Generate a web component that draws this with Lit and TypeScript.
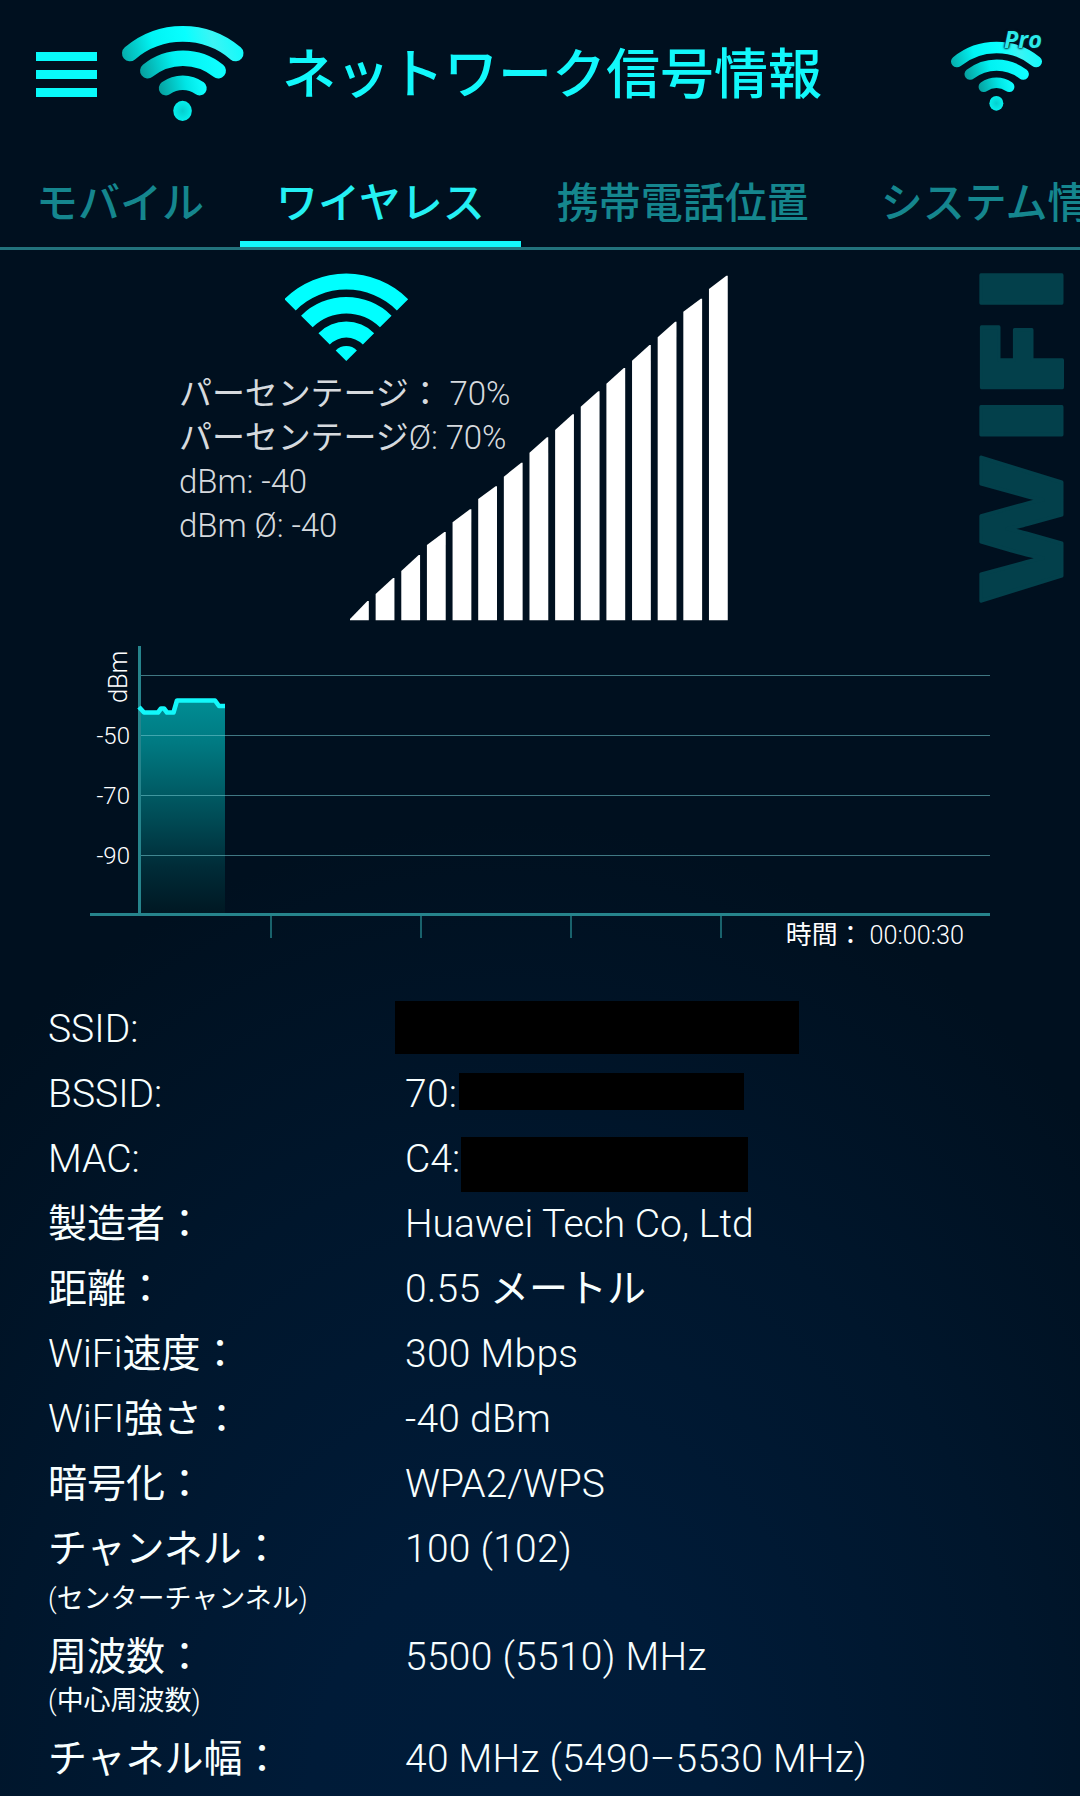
import { LitElement, html, svg, css } from "lit";
import { customElement, property } from "lit/decorators.js";

/* Japanese runs are set in regular weight beside the light Latin text. */
const mixed = (text: string) =>
  text
    .split(/([\u3000-\u9fff\uff00-\uffef]+)/)
    .filter((part) => part)
    .map((part) => (/[\u3000-\u9fff\uff00-\uffef]/.test(part) ? html`<span class="ja">${part}</span>` : part));

/* Rounded three-arc signal logo used in the title bar. */
@customElement("signal-logo")
class SignalLogo extends LitElement {
  static styles = css`
    :host { display: block; }
    svg { display: block; width: 100%; height: 100%; overflow: visible; }
    .arc { fill: none; stroke-linecap: round; }
  `;
  render() {
    return html`<svg viewBox="0 0 123 97" preserveAspectRatio="none">
      <defs>
        <linearGradient id="g1" gradientUnits="userSpaceOnUse" x1="0" y1="40" x2="123" y2="10">
          <stop offset="0" stop-color="#06a8a6" /><stop offset=".28" stop-color="#00f4f4" />
          <stop offset=".55" stop-color="#08ffff" /><stop offset=".75" stop-color="#3cf4f4" /><stop offset="1" stop-color="#0cfcfc" />
        </linearGradient>
        <linearGradient id="g2" gradientUnits="userSpaceOnUse" x1="18" y1="54" x2="100" y2="34">
          <stop offset="0" stop-color="#079a98" /><stop offset=".45" stop-color="#00f2f2" /><stop offset="1" stop-color="#10ffff" />
        </linearGradient>
        <linearGradient id="g3" gradientUnits="userSpaceOnUse" x1="36" y1="66" x2="84" y2="56">
          <stop offset="0" stop-color="#079c9a" /><stop offset=".6" stop-color="#00e6e6" /><stop offset="1" stop-color="#10ffff" />
        </linearGradient>
        <radialGradient id="g4"><stop offset="0" stop-color="#04cfcf" /><stop offset="1" stop-color="#06efec" /></radialGradient>
      </defs>
      <path class="arc" stroke="url(#g1)" stroke-width="16" d="M8 28.5A83 83 0 0 1 115 28.5" />
      <path class="arc" stroke="url(#g2)" stroke-width="15.5" d="M26 46A57 57 0 0 1 97.5 46" />
      <path class="arc" stroke="url(#g3)" stroke-width="14.5" d="M44.5 63.5A29 29 0 0 1 78.5 63.5" />
      <ellipse cx="61.3" cy="86.3" rx="9.4" ry="10.2" fill="url(#g4)" />
    </svg>`;
  }
}

/* Sharp wedge icon above the readings. */
const wedge = (() => {
  const band = (o: number, i: number) => {
    const k = Math.SQRT1_2, cx = 61.3, cy = 88;
    const p = (r: number, s: number) => `${cx + s * r * k} ${cy - r * k}`;
    return i
      ? `M${p(o, -1)}A${o} ${o} 0 0 1 ${p(o, 1)}L${p(i, 1)}A${i} ${i} 0 0 0 ${p(i, -1)}Z`
      : `M${p(o, -1)}A${o} ${o} 0 0 1 ${p(o, 1)}L${cx} ${cy}Z`;
  };
  return [band(87.5, 71.5), band(64, 47.6), band(39.4, 23.4), band(15, 0)];
})();

/* Top-left and top-right height offset of each bar. */
const barTops = [
  [344, 326], [319, 303], [296, 280], [270, 257], [247.3, 234.3], [224, 211.3], [201.7, 187.7],
  [177.7, 162.3], [155, 139.3], [131.7, 116.3], [108.7, 93], [85.7, 70], [62.3, 46.7], [36.7, 23.7], [14, 0.7],
];

@customElement("signal-panel")
class SignalPanel extends LitElement {
  static styles = css`
    :host {
      display: grid; height: 382px; box-sizing: border-box; padding-top: 23px;
      grid-template-columns: 179px 171px 378px 252px 84px 16px;
      grid-template-rows: 88px 1fr; align-items: start;
    }
    .ja { font-weight: 400; }
    .wedge { grid-column: 2 / 4; grid-row: 1; width: 124px; height: 88px; margin-left: 106px; }
    .readings { grid-column: 2 / 4; grid-row: 2; z-index: 1; padding-top: 11px; color: #d6dade; font-size: 33px; letter-spacing: -.1px; }
    .line { height: 44px; line-height: 44px; white-space: pre; }
    .bars { grid-column: 3; grid-row: 1 / 3; width: 378px; height: 348px; margin-top: 2px; }
    .word { grid-column: 5; grid-row: 1 / 3; width: 84px; height: 330px; margin-top: 3px; overflow: visible; }
    .word text { font-family: "Open Sans", sans-serif; font-weight: 800; font-size: 113px; fill: #03404b; stroke: #03404b; stroke-width: 3px; stroke-linejoin: round; }
  `;
  render() {
    const lines = ["パーセンテージ： 70%", "パーセンテージØ: 70%", "dBm: -40", "dBm Ø: -40"];
    return html`
      <svg class="wedge" viewBox="0 0 124 88">${wedge.map((d) => svg`<path fill="#00ffff" d=${d} />`)}</svg>
      <div class="readings">${lines.map((l) => html`<div class="line">${mixed(l)}</div>`)}</div>
      <svg class="bars" viewBox="0 0 378 348">
        ${barTops.map(([l, r], i) => {
          const x = i * 25.64;
          return svg`<polygon fill="#fff" points="${x},${l} ${x + 17.4},${r} ${x + 18.8},${r} ${x + 18.8},345.3 ${x},345.3" />`;
        })}
      </svg>
      <svg class="word" viewBox="0 0 84 330">
        <text transform="translate(82 327) rotate(-90) scale(1.26 1)" x="0 125 162.5 229.5">WIFI</text>
      </svg>`;
  }
}

@customElement("signal-chart")
class SignalChart extends LitElement {
  static styles = css`
    :host { display: block; height: 348px; }
    svg { display: block; }
    text { font-family: Roboto, "Noto Sans CJK JP", sans-serif; font-weight: 300; font-size: 24px; fill: #fff; white-space: pre; }
    .ja { font-weight: 400; }
    .unit { font-size: 25.4px; }
    .time { font-size: 25.2px; }
    .time .ja { font-size: 25.9px; }
    .axis { fill: #26848c; }
    .grid { fill: #6fc4cc; fill-opacity: .58; }
    .tick { fill: #19626c; }
    .trace { fill: none; stroke: #12f8fb; stroke-width: 4.6; stroke-linejoin: round; }
  `;
  render() {
    const trace = "139,75 144,80.5 158,80.5 161,76.5 164,76.5 167,80.5 173.5,80.5 177,68.5 215,68.5 219,74 225,74";
    return html`<svg width="1080" height="348" viewBox="0 0 1080 348">
      <defs>
        <linearGradient id="fill" x1="0" y1="68" x2="0" y2="281" gradientUnits="userSpaceOnUse">
          <stop offset="0" stop-color="#008d94" /><stop offset=".2" stop-color="#007a82" />
          <stop offset=".55" stop-color="#004c56" /><stop offset=".78" stop-color="#002c38" /><stop offset="1" stop-color="#001823" />
        </linearGradient>
      </defs>
      <polygon fill="url(#fill)" points="139,281 ${trace} 225,281" />
      ${[43, 103, 163, 223].map((y) => svg`<rect class="grid" x="141" y=${y} width="849" height="1" />`)}
      <rect class="axis" x="138" y="14" width="3" height="270" />
      <rect class="axis" x="90" y="281" width="900" height="3" />
      ${[270, 420, 570, 720].map((x) => svg`<rect class="tick" x=${x} y="284" width="2" height="22" />`)}
      <polyline class="trace" points=${trace} />
      <text class="unit" transform="translate(127 71) rotate(-90)">dBm</text>
      <text x="130" y="112" text-anchor="end">-50</text>
      <text x="130" y="172" text-anchor="end">-70</text>
      <text x="130" y="232" text-anchor="end">-90</text>
      <text class="time" x="964" y="312" text-anchor="end"><tspan class="ja">時間：</tspan> 00:00:30</text>
    </svg>`;
  }
}

interface Entry { label: string; value: string; note?: string; noteClass?: string; mask?: string; }

const entries: Entry[] = [
  { label: "SSID:", value: "", mask: "m1" },
  { label: "BSSID:", value: "70:", mask: "m2" },
  { label: "MAC:", value: "C4:", mask: "m3" },
  { label: "製造者：", value: "Huawei Tech Co, Ltd" },
  { label: "距離：", value: "0.55 メートル" },
  { label: "WiFi速度：", value: "300 Mbps" },
  { label: "WiFI強さ：", value: "-40 dBm" },
  { label: "暗号化：", value: "WPA2/WPS" },
  { label: "チャンネル：", value: "100 (102)", note: "(センターチャンネル)", noteClass: "n1" },
  { label: "周波数：", value: "5500 (5510) MHz", note: "(中心周波数)", noteClass: "n2" },
  { label: "チャネル幅：", value: "40 MHz (5490–5530 MHz)" },
];

@customElement("info-list")
class InfoList extends LitElement {
  static styles = css`
    :host { display: block; padding: 17px 0 0 48px; color: #f8ffff; font-size: 39px; }
    .row { display: grid; grid-template-columns: 357px 1fr; height: 65px; line-height: 65px; white-space: pre; }
    .ja { font-weight: 400; }
    .value { position: relative; }
    .digits { letter-spacing: .27px; }
    .digits .ja { letter-spacing: 0; }
    .mask { position: absolute; background: #000; }
    .m1 { left: -10px; top: 4px; width: 404px; height: 53px; }
    .m2 { left: 54px; top: 11px; width: 285px; height: 37px; }
    .m3 { left: 56px; top: 10px; width: 287px; height: 55px; }
    .note { font-size: 27px; }
    .n1 { height: 43px; line-height: 34px; }
    .n2 { height: 37px; line-height: 22px; }
  `;
  render() {
    return entries.map((e) => html`
      <div class="row"><div>${mixed(e.label)}</div><div class="value ${/\d\d/.test(e.value) ? "digits" : ""}">${mixed(e.value)}${e.mask ? html`<span class="mask ${e.mask}"></span>` : null}</div></div>
      ${e.note ? html`<div class="note ${e.noteClass}">${mixed(e.note)}</div>` : null}`);
  }
}

@customElement("app-root")
class AppRoot extends LitElement {
  @property({ type: Number }) active = 1;
  static styles = css`
    :host {
      display: block; width: 1080px; height: 1796px; overflow: hidden;
      font-family: Roboto, "Noto Sans CJK JP", sans-serif; font-weight: 300;
      background: radial-gradient(ellipse 800px 980px at 510px 1800px, #001c3a 0%, #001b38 25%, #00162c 65%, #00101f 100%), #00101f;
    }
    .bar { display: flex; height: 147px; box-sizing: border-box; padding: 0 38px 0 36px; align-items: flex-start; }
    .menu { display: flex; flex-direction: column; gap: 8.4px; padding-top: 51.7px; width: 61px; }
    .menu span { height: 9.6px; background: #08fafa; }
    .logo { width: 121.5px; height: 96.5px; margin: 24.5px 0 0 24.5px; }
    h1 { margin: 0 auto 0 39px; font-size: 54px; line-height: 60px; padding-top: 41px; font-weight: 500; color: #12f8fb; font-family: "Noto Sans CJK JP", sans-serif; white-space: nowrap; }
    .pro { position: relative; width: 91px; padding-top: 41px; }
    .pro signal-logo { width: 91px; height: 70px; }
    .pro b { position: absolute; right: 0; top: 24.5px; font: italic 700 23.5px/29px "Open Sans", sans-serif; color: #2ceaea; text-shadow: 0 0 3px #00222c, 0 0 2px #00222c, 0 0 2px #00222c, 0 0 1px #00222c; }
    .tabs { display: flex; height: 103px; box-sizing: border-box; border-bottom: 3px solid #22727c; overflow: hidden; }
    .tab { flex: none; padding: 23px 36px 0; height: 100px; box-sizing: border-box; font: 500 42px/60px "Noto Sans CJK JP", sans-serif; color: #15868e; white-space: nowrap; }
    .tab.on { color: #24f0f4; border-bottom: 6px solid #14f6fa; }
  `;
  render() {
    const tabs = ["モバイル", "ワイヤレス", "携帯電話位置", "システム情報"];
    return html`
      <header class="bar">
        <div class="menu"><span></span><span></span><span></span></div>
        <signal-logo class="logo"></signal-logo>
        <h1>ネットワーク信号情報</h1>
        <div class="pro"><signal-logo></signal-logo><b>Pro</b></div>
      </header>
      <nav class="tabs">${tabs.map((t, i) => html`<div class="tab ${i === this.active ? "on" : ""}">${t}</div>`)}</nav>
      <signal-panel></signal-panel>
      <signal-chart></signal-chart>
      <info-list></info-list>`;
  }
}
